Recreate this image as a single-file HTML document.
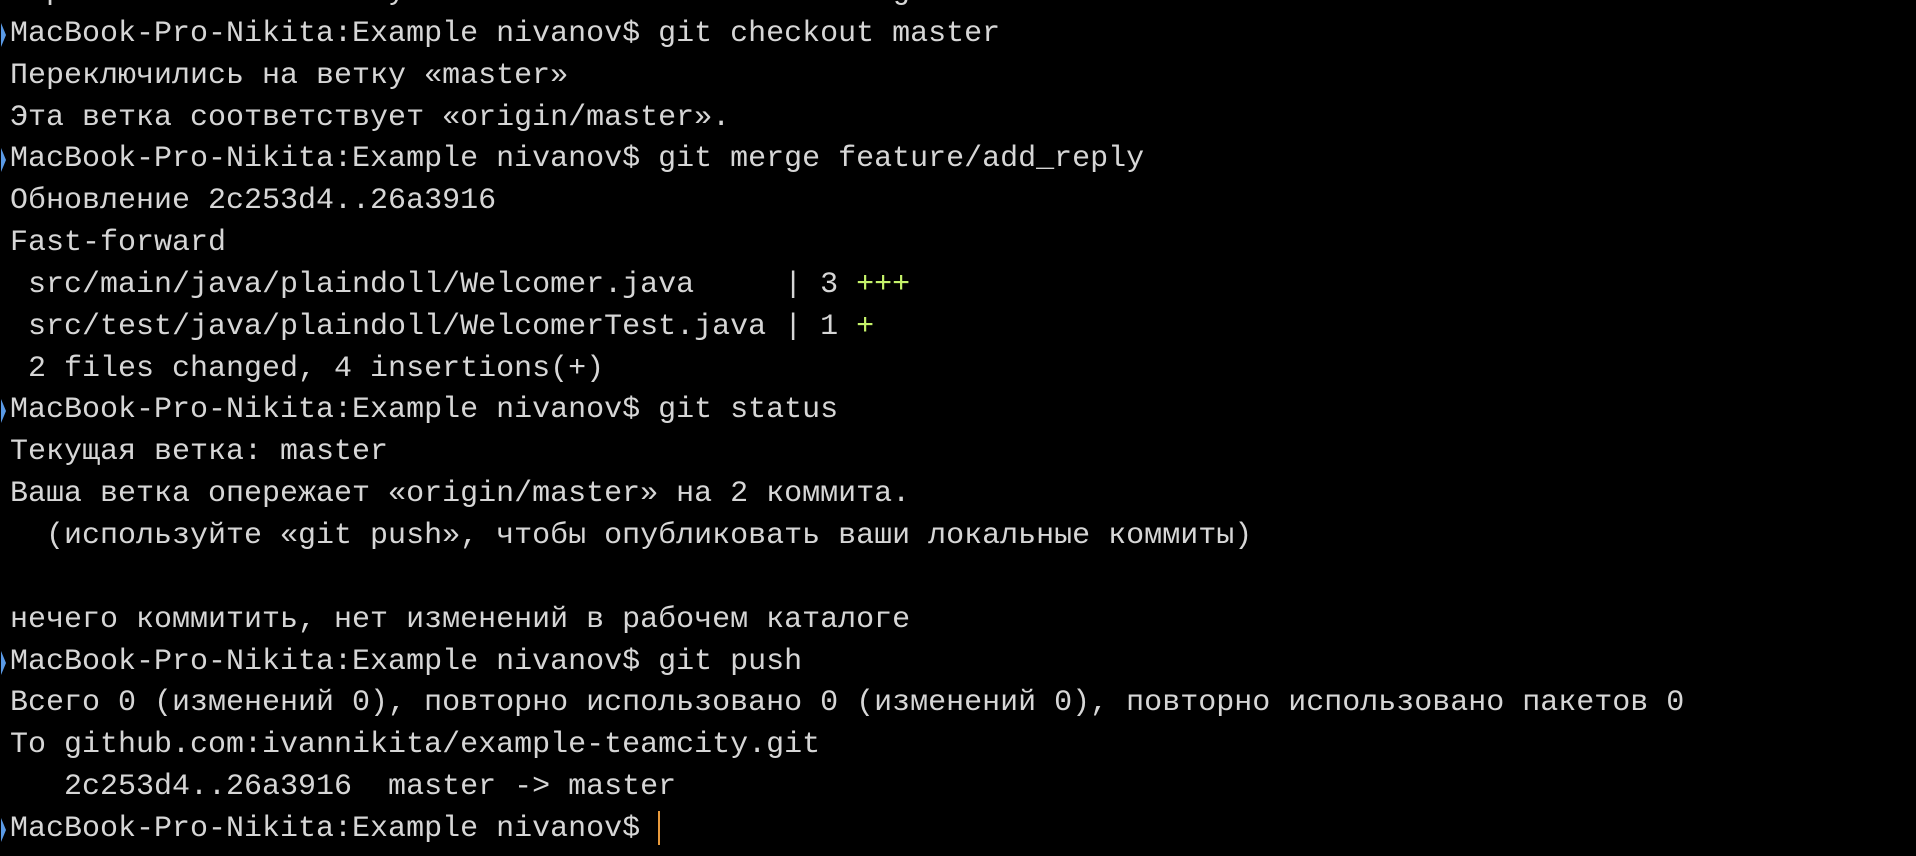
<!DOCTYPE html>
<html><head><meta charset="utf-8"><style>
html,body{margin:0;padding:0;background:#000;width:1916px;height:856px;overflow:hidden}
pre{position:absolute;left:10px;top:-28px;margin:0;font-family:"Liberation Mono","DejaVu Sans Mono",monospace;font-size:30px;line-height:41.85px;color:#d6d6d6;white-space:pre}
.g{color:#c5f26a}
.m{position:relative}
.m:before{content:"";position:absolute;left:-9px;top:6px;width:0;height:0;border-left:5px solid #5a9ae6;border-top:12px solid transparent;border-bottom:12px solid transparent}
.c{display:inline-block;width:2px;height:34px;background:#e89a3c;vertical-align:middle;margin-left:18px}
</style></head><body><pre>Переключились на ветку «master» из remote-tracking ветки
<span class="m">MacBook-Pro-Nikita:Example nivanov$ git checkout master</span>
Переключились на ветку «master»
Эта ветка соответствует «origin/master».
<span class="m">MacBook-Pro-Nikita:Example nivanov$ git merge feature/add_reply</span>
Обновление 2c253d4..26a3916
Fast-forward
 src/main/java/plaindoll/Welcomer.java     | 3 <span class="g">+++</span>
 src/test/java/plaindoll/WelcomerTest.java | 1 <span class="g">+</span>
 2 files changed, 4 insertions(+)
<span class="m">MacBook-Pro-Nikita:Example nivanov$ git status</span>
Текущая ветка: master
Ваша ветка опережает «origin/master» на 2 коммита.
  (используйте «git push», чтобы опубликовать ваши локальные коммиты)

нечего коммитить, нет изменений в рабочем каталоге
<span class="m">MacBook-Pro-Nikita:Example nivanov$ git push</span>
Всего 0 (изменений 0), повторно использовано 0 (изменений 0), повторно использовано пакетов 0
To github.com:ivannikita/example-teamcity.git
   2c253d4..26a3916  master -&gt; master
<span class="m">MacBook-Pro-Nikita:Example nivanov$<span class="c"></span></span></pre></body></html>
